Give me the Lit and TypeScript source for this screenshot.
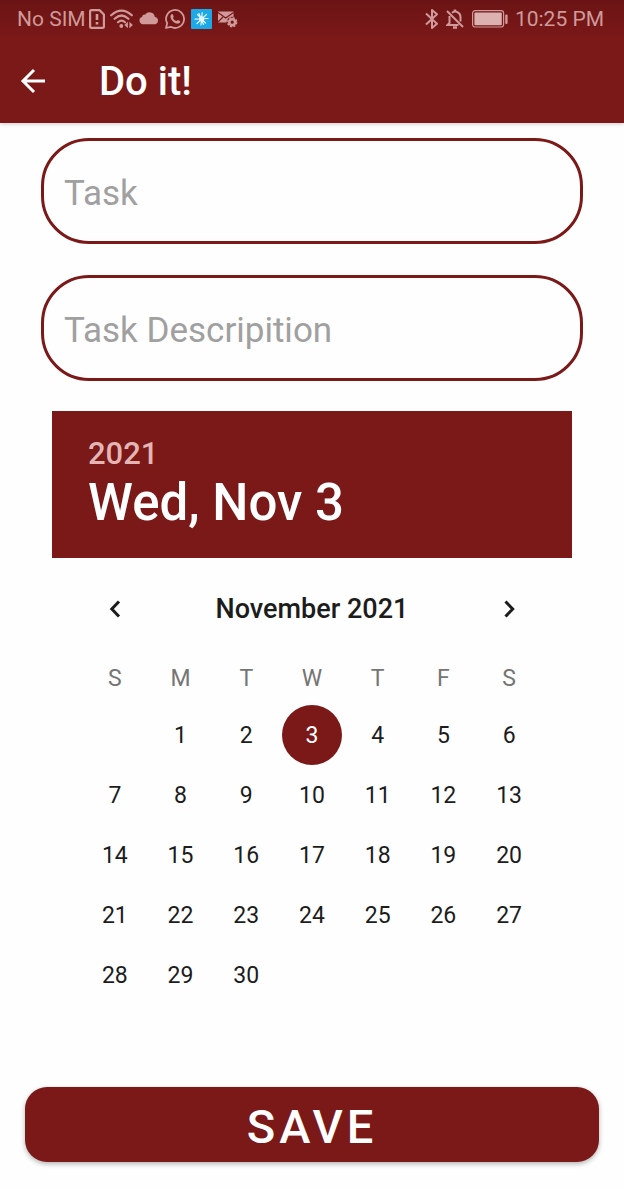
import { LitElement, html, css, svg, nothing } from "lit";
import { customElement, state } from "lit/decorators.js";

const MONTHS = ["January", "February", "March", "April", "May", "June", "July", "August", "September", "October", "November", "December"];
const DAYS = ["Sunday", "Monday", "Tuesday", "Wednesday", "Thursday", "Friday", "Saturday"];

@customElement("status-bar")
class StatusBar extends LitElement {
  static styles = css`
    :host {
      display: flex;
      justify-content: space-between;
      align-items: center;
      height: 38px;
      padding: 0 20px 0 17px;
      color: #cf9a99;
      font-size: 21px;
      line-height: 24px;
      background: linear-gradient(#6b1415, #7b1818);
    }
    .group { display: flex; align-items: center; white-space: nowrap; }
    .left { gap: 3px; }
    .icons { display: flex; align-items: center; gap: 5px; }
    .right { gap: 7px; }
    svg { display: block; flex: none; }
  `;

  render() {
    return html`
      <div class="group left">
        <span>No SIM</span>
        <div class="icons">
          <svg width="16" height="20" viewBox="0 0 16 20" fill="none" stroke="currentColor" stroke-width="2.2" stroke-linejoin="round">
            <path d="M2.5 1.1H10.5L14.9 5.5V17.5Q14.9 18.9 13.5 18.9H2.5Q1.1 18.9 1.1 17.5V2.5Q1.1 1.1 2.5 1.1Z" />
            <path d="M8 5V11M8 13V15.4" stroke-width="2.6" />
          </svg>
          <svg width="24" height="20" viewBox="0 0 24 20" fill="none" stroke="currentColor" stroke-width="2.2" stroke-linecap="round">
            <path d="M1.2 6.3Q11.5-3.2 21.8 6.3M4.6 9.8Q11.5 3.2 18.4 9.8M8 13.2Q11.5 10 15 13.2" />
            <circle cx="11.3" cy="17" r="1.9" fill="currentColor" stroke="none" />
            <path d="M17.9 12.8V19.2L14.4 16ZM19.4 12.8V19.2L22.9 16Z" fill="currentColor" stroke="none" />
          </svg>
          <svg width="20" height="20" viewBox="0 0 20 20" fill="currentColor">
            <path d="M4 15.2A3.7 3.7 0 0 1 3 8A3 3 0 0 1 6.2 5.6A5.3 5.3 0 0 1 15.8 8A3.7 3.7 0 0 1 16.4 15.2Z" />
          </svg>
          <svg width="22" height="20" viewBox="0 0 22 20" fill="none" stroke="currentColor" stroke-width="1.8" stroke-linejoin="round">
            <path d="M2 19L3.2 14.3A9 9 0 1 1 6.7 17.8Z" />
            <path d="M7.2 5.5C7.7 4.8 8.5 4.8 8.8 5.4L9.7 7.4C9.8 8 8.9 8.7 8.9 9C9.7 10.6 10.8 11.5 12.3 12.1C12.8 12.1 13.3 11 13.9 11L15.9 12C16.5 12.3 16.1 13.4 15.6 13.9C14.2 15.1 12.3 14.6 10.6 13.7C8.7 12.6 7.2 10.7 6.6 8.7C6.3 7.5 6.5 6.4 7.2 5.5Z" fill="currentColor" stroke="none" />
          </svg>
          <svg width="21" height="20" viewBox="0 0 21 20">
            <rect width="21" height="20" rx="1" fill="#1ba9e8" />
            <path d="M11.2 3.5L10 16M4 10.2L17 9.5M6.5 5.5L14.5 14M15.5 5.5L6 14.5M8 4.5L12.5 15.5" fill="none" stroke="#e4f6fd" stroke-width="1.2" stroke-linecap="round" />
            <circle cx="10.6" cy="9.8" r="2.6" fill="#e4f6fd" />
          </svg>
          <svg width="21" height="20" viewBox="0 0 21 20">
            <path d="M1 2.5H16.5V8A5.5 5.5 0 0 0 9.6 13.5H1Z" fill="currentColor" />
            <path d="M1 3.5L8.7 9L16.5 3.5M1 13L6 8" fill="none" stroke="#771717" stroke-width="1.1" />
            <circle cx="15.2" cy="13.2" r="2.9" fill="none" stroke="currentColor" stroke-width="2.6" />
            <circle cx="15.2" cy="13.2" r="4.5" fill="none" stroke="currentColor" stroke-width="1.4" stroke-dasharray="2.1 1.434" />
          </svg>
        </div>
      </div>
      <div class="group right">
        <svg width="14" height="20" viewBox="0 0 14 20" fill="none" stroke="currentColor" stroke-width="2" stroke-linejoin="round">
          <path d="M1 4.5L12 14.7L7 19V1L12 5.3L1 15.5" />
        </svg>
        <svg width="19" height="20" viewBox="0 0 19 20" fill="none" stroke="currentColor" stroke-width="2">
          <path d="M1 2L17 18M3.5 7V14L1.5 16H12.5M6 3.8C10 .8 14.5 4 14.5 8V12.5" />
          <path d="M9 .5V3M7 18.5H11" stroke-width="2.4" />
        </svg>
        <svg width="36" height="18" viewBox="0 0 36 18">
          <rect x=".6" y=".6" width="31" height="16.4" rx="2.5" fill="none" stroke="currentColor" stroke-width="1.2" />
          <rect x="2.4" y="2.4" width="27.4" height="12.8" rx="1" fill="#dcb2b1" />
          <rect x="33.2" y="4.5" width="2.4" height="9.5" rx="1" fill="currentColor" />
        </svg>
        <span>10:25 PM</span>
      </div>
    `;
  }
}

@customElement("date-picker")
class DatePicker extends LitElement {
  @state() selected = new Date(2021, 10, 3);
  @state() year = 2021;
  @state() month = 10;

  static styles = css`
    :host { display: block; }
    .banner {
      padding: 25px 36px;
      height: 147px;
      box-sizing: border-box;
      background: #7b1818;
      color: #fff;
      font-weight: 500;
    }
    .year { margin: 0; font-size: 31px; line-height: 36px; color: #e3b5b4; }
    .date { margin: 0; font-size: 51px; line-height: 62px; font-weight: 500; }
    .calendar { padding: 21px 30px 0; }
    .nav { display: grid; grid-template-columns: 1fr 5fr 1fr; align-items: center; height: 60px; }
    .month { margin: 0; text-align: center; font-size: 27px; line-height: 30px; font-weight: 500; }
    button {
      display: grid;
      place-items: center;
      width: 60px;
      height: 60px;
      margin: 0 auto;
      padding: 0;
      border: 0;
      border-radius: 50%;
      background: none;
      color: inherit;
      font: inherit;
      cursor: pointer;
    }
    table { width: 100%; border-collapse: collapse; table-layout: fixed; font-size: 23px; line-height: 28px; }
    th, td { padding: 0; text-align: center; }
    th { height: 66px; padding-top: 26px; box-sizing: border-box; vertical-align: top; font-weight: 400; color: #757575; }
    td button { padding-top: 2px; }
    .chosen { background: #7b1818; color: #fff; }
  `;

  private move(step: number) {
    const next = new Date(this.year, this.month + step, 1);
    this.year = next.getFullYear();
    this.month = next.getMonth();
  }

  private weeks() {
    const cells: number[] = Array(new Date(this.year, this.month, 1).getDay()).fill(0);
    const count = new Date(this.year, this.month + 1, 0).getDate();
    for (let d = 1; d <= count; d++) cells.push(d);
    while (cells.length % 7) cells.push(0);
    const rows: number[][] = [];
    for (let i = 0; i < cells.length; i += 7) rows.push(cells.slice(i, i + 7));
    return rows;
  }

  private isChosen(d: number) {
    return this.selected.getTime() === new Date(this.year, this.month, d).getTime();
  }

  private chevron(points: string) {
    return html`<svg width="14" height="20" viewBox="0 0 14 20" fill="none" stroke="#1c1c1c" stroke-width="3" aria-hidden="true">${svg`<polyline points=${points} />`}</svg>`;
  }

  render() {
    const s = this.selected;
    return html`
      <div class="banner">
        <p class="year">${s.getFullYear()}</p>
        <h2 class="date">${DAYS[s.getDay()].slice(0, 3)}, ${MONTHS[s.getMonth()].slice(0, 3)} ${s.getDate()}</h2>
      </div>
      <div class="calendar">
        <div class="nav">
          <button aria-label="Previous month" @click=${() => this.move(-1)}>${this.chevron("11,2.5 3.8,10 11,17.5")}</button>
          <h3 class="month">${MONTHS[this.month]} ${this.year}</h3>
          <button aria-label="Next month" @click=${() => this.move(1)}>${this.chevron("3.5,2.5 10.7,10 3.5,17.5")}</button>
        </div>
        <table>
          <thead>
            <tr>${DAYS.map((d) => html`<th scope="col" abbr=${d}>${d[0]}</th>`)}</tr>
          </thead>
          <tbody>
            ${this.weeks().map((week) => html`<tr>${week.map((d) => html`<td>${d
              ? html`<button class=${this.isChosen(d) ? "chosen" : ""} @click=${() => (this.selected = new Date(this.year, this.month, d))}>${d}</button>`
              : nothing}</td>`)}</tr>`)}
          </tbody>
        </table>
      </div>
    `;
  }
}

@customElement("app-root")
class AppRoot extends LitElement {
  static styles = css`
    :host {
      display: flex;
      flex-direction: column;
      min-height: 100vh;
      background: #fefefe;
      color: #1c1c1c;
      font-family: Roboto, "Liberation Sans", sans-serif;
    }
    .top { background: #7b1818; box-shadow: 0 1px 4px rgba(0, 0, 0, 0.2); }
    .bar { display: flex; align-items: center; gap: 48px; height: 85px; padding: 0 15px; color: #fff; }
    .back { display: grid; place-items: center; width: 36px; height: 48px; padding: 0; border: 0; background: none; color: inherit; cursor: pointer; }
    .title { margin: 0; padding-top: 3px; font-size: 40px; line-height: 48px; font-weight: 500; }
    form { flex: 1; display: flex; flex-direction: column; padding: 15px 25px 27px; }
    .fields { display: grid; gap: 31px; padding: 0 16px; }
    .field {
      width: 100%;
      height: 106px;
      box-sizing: border-box;
      padding: 4px 20px 0;
      border: 3px solid #7b1818;
      border-radius: 48px;
      background: transparent;
      color: #1c1c1c;
      font: 400 35px/42px Roboto, "Liberation Sans", sans-serif;
    }
    .field::placeholder { color: #a0a0a0; opacity: 1; }
    date-picker { margin: 30px 27px 32px; }
    .save {
      height: 75px;
      margin-top: auto;
      padding: 4px 0 0;
      border: 0;
      border-radius: 22px;
      background: #7b1818;
      color: #fff;
      box-shadow: 0 2px 5px rgba(0, 0, 0, 0.3);
      font: 500 47px/56px Roboto, "Liberation Sans", sans-serif;
      letter-spacing: 4px;
      cursor: pointer;
    }
  `;

  render() {
    return html`
      <header class="top">
        <status-bar></status-bar>
        <div class="bar">
          <button class="back" aria-label="Back">
            <svg width="26" height="26" viewBox="0 0 26 26" fill="none" stroke="currentColor" stroke-width="3" aria-hidden="true">
              <path d="M25 13H3M14 2L3 13L14 24" />
            </svg>
          </button>
          <h1 class="title">Do it!</h1>
        </div>
      </header>
      <form @submit=${(e: Event) => e.preventDefault()}>
        <div class="fields">
          <input class="field" type="text" name="task" placeholder="Task" aria-label="Task" />
          <input class="field" type="text" name="description" placeholder="Task Descripition" aria-label="Task Descripition" />
        </div>
        <date-picker></date-picker>
        <button class="save" type="submit">SAVE</button>
      </form>
    `;
  }
}
